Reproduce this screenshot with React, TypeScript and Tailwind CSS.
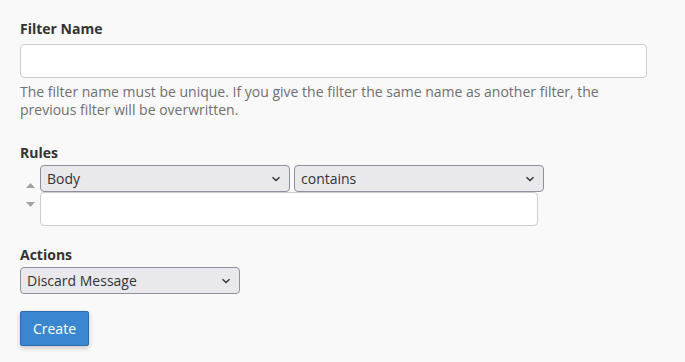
import React from "react";

function Chevron() {
  return (
    <svg width="10" height="6" viewBox="0 0 10 6" className="absolute right-[8px] top-1/2 -translate-y-1/2">
      <path d="M1.5 1.2 L5 4.6 L8.5 1.2" fill="none" stroke="#333" strokeWidth="1.4" />
    </svg>
  );
}

function Select({ label, w }: { label: string; w: string }) {
  return (
    <div className={`relative h-[27px] ${w} rounded-[4px] border border-[#8f8f9d] bg-[#e9e9ed] pl-[6px] text-[14px] leading-[25px] text-[#333]`}>
      {label}
      <Chevron />
    </div>
  );
}

export default function App() {
  return (
    <div className="min-h-[362px] w-full bg-[#f9f9f9] pl-[20px] pr-[38px] pt-[19px] text-[#333]" style={{ fontFamily: '"Open Sans", sans-serif' }}>
      <div className="text-[14px] font-bold leading-[20px] text-[#333]">Filter Name</div>
      <div className="mt-[5px] h-[34px] w-[627px] rounded-[4px] border border-[#ccc] bg-white" />
      <p className="mt-[5px] text-[14px] leading-[18px] text-[#6f6f6f]">
        The filter name must be unique. If you give the filter the same name as another filter, the previous filter will be overwritten.
      </p>

      <div className="mt-[24px] text-[14px] font-bold leading-[20px]">Rules</div>
      <div className="mt-[2px] flex">
        <div className="flex w-[20px] flex-col items-start pl-[6px] pt-[18px]">
          <svg width="9" height="5" viewBox="0 0 9 5"><path d="M0 5 L4.5 0 L9 5 Z" fill="#a3a3a3" /></svg>
          <svg width="9" height="5" viewBox="0 0 9 5" className="mt-[14px]"><path d="M0 0 L4.5 5 L9 0 Z" fill="#a3a3a3" /></svg>
        </div>
        <div className="flex flex-col">
          <div className="flex gap-[4px]">
            <Select label="Body" w="w-[250px]" />
            <Select label="contains" w="w-[250px]" />
          </div>
          <div className="h-[34px] w-[498px] rounded-[4px] border border-[#ccc] bg-white" />
        </div>
      </div>

      <div className="mt-[19px] text-[14px] font-bold leading-[20px]">Actions</div>
      <div className="mt-[2px]">
        <Select label="Discard Message" w="w-[220px]" />
      </div>
      <button className="mt-[17px] h-[35px] w-[69px] rounded-[2px] border border-[#2b6db0] bg-[#3a87d0] text-[14px] text-white shadow-[0_2px_5px_rgba(0,0,0,0.2)]">
        Create
      </button>
    </div>
  );
}
